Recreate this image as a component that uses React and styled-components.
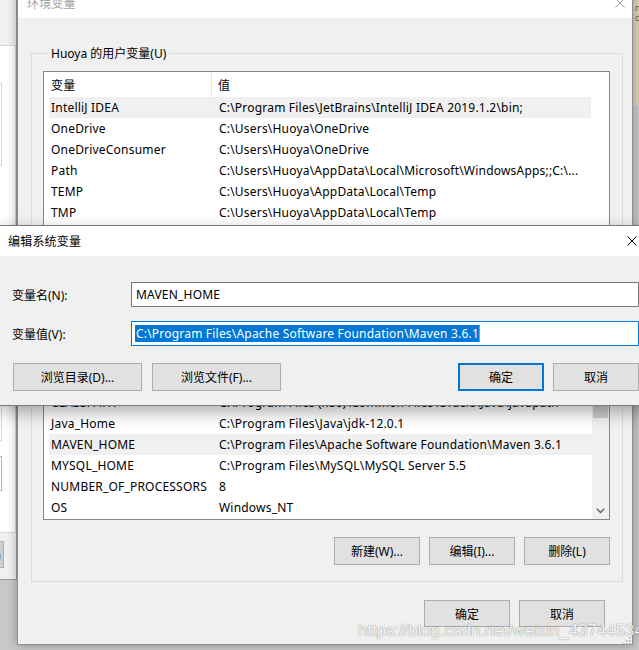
import React from 'react';
import styled, { createGlobalStyle } from 'styled-components';

const Global = createGlobalStyle`
  html, body { margin: 0; padding: 0; }
  body {
    width: 639px; height: 650px; overflow: hidden; background: #c8c8c8;
    font-family: "Noto Sans", "Noto Sans CJK SC", sans-serif;
    font-size: 12px; color: #000;
    letter-spacing: 0.2px;
  }
  * { box-sizing: border-box; }
`;

const Desktop = styled.div`
  position: relative;
  width: 639px;
  height: 650px;
  overflow: hidden;
  background: #c8c8c8;
`;

/* ---------- window behind (left) ---------- */
const BackWindow = styled.div`
  position: absolute;
  left: -300px;
  top: -40px;
  width: 317px;
  height: 620px;
  background: #f0f0f0;
  border: 1px solid #9a9a9a;
  display: flex;
  flex-direction: column;
  padding-top: 84px;
`;
const TabPanel = styled.div`
  height: 488px;
  background: #fff;
  border: 1px solid #d9d9d9;
  display: flex;
  flex-direction: column;
  align-items: flex-end;
  padding: 37px 13px 0 0;
`;
const PanelBox = styled.div`
  width: 200px;
  height: ${p => p.$h}px;
  margin-top: ${p => p.$mt}px;
  border: 1px solid #d5d5d5;
  background: #fff;
`;
const PanelButton = styled.div`
  width: 90px;
  height: 35px;
  margin-top: ${p => p.$mt}px;
  border: 1px solid #b5b5b5;
  background: #fff;
`;
const BackButtons = styled.div`
  display: flex;
  justify-content: flex-end;
  padding: 8px 12px 0 0;
`;
const BackButton = styled.div`
  width: 86px;
  height: 27px;
  background: #cfcfcf;
  border: 1px solid #adadad;
  display: flex;
  align-items: center;
  justify-content: flex-end;
  padding-right: 2px;
  color: #666;
`;

const RightStrip = styled.div`
  position: absolute;
  left: 633px;
  top: 0;
  width: 30px;
  height: 105px;
  background: #d9d1bb;
  font-size: 9px;
  line-height: 10px;
  color: #6b6558;
  padding: 3px 0 0 2px;
  white-space: pre;
`;

/* ---------- main window ---------- */
const MainWindow = styled.div`
  position: absolute;
  left: 17px;
  top: -14px;
  width: 616px;
  height: 659px;
  border: 1px solid #8f8f8f;
  background: #f0f0f0;
  box-shadow: 0 0 10px rgba(0, 0, 0, 0.3);
  display: flex;
  flex-direction: column;
`;
const TitleBar = styled.div`
  height: ${p => p.$h}px;
  flex: none;
  background: #fff;
  display: flex;
  align-items: center;
  justify-content: space-between;
  padding-left: ${p => p.$pl}px;
  color: ${p => (p.$inactive ? '#a0a0a0' : '#000')};
`;
const CloseBox = styled.div`
  width: 24px;
  height: 24px;
  margin-right: ${p => p.$mr}px;
  display: flex;
  align-items: center;
  justify-content: center;
`;
const MainBody = styled.div`
  flex: 1;
  display: flex;
  flex-direction: column;
  padding: 27px 9px 0 13px;
`;
const Group = styled.fieldset`
  margin: ${p => p.$mt || 0}px 0 0 0;
  padding: 9px 12px ${p => p.$pb}px 11px;
  border: 1px solid #dcdcdc;
  min-width: 0;
`;
const Legend = styled.legend`
  margin-left: 5px;
  padding: 0 3px;
  line-height: 17px;
  font-size: 12px;
  letter-spacing: 0;
`;
const ListBox = styled.div`
  height: ${p => p.$h}px;
  border: 1px solid #828790;
  background: #fff;
  display: flex;
  overflow: hidden;
`;
const ListRows = styled.div`
  flex: 1;
  min-width: 0;
  display: flex;
  flex-direction: column;
  justify-content: ${p => (p.$bottom ? 'flex-end' : 'flex-start')};
  padding: 0 0 ${p => (p.$bottom ? 1 : 0)}px 5px;
  overflow: hidden;
`;
const HeaderRow = styled.div`
  flex: none;
  display: flex;
  height: 25px;
  align-items: stretch;
`;
const HeaderCell = styled.div`
  display: flex;
  align-items: center;
  padding-left: ${p => p.$pl}px;
  width: ${p => (p.$w ? p.$w + 'px' : 'auto')};
  flex: ${p => (p.$w ? 'none' : '1')};
  border-right: ${p => (p.$divider ? '1px solid #e5e5e5' : 'none')};
`;
const Row = styled.div`
  flex: none;
  display: flex;
  height: 21px;
  align-items: center;
  background: ${p => (p.$selected ? '#f0f0f0' : 'transparent')};
  white-space: nowrap;
`;
const NameCell = styled.div`
  width: 163px;
  flex: none;
  padding-left: 2px;
  overflow: hidden;
`;
const ValueCell = styled.div`
  flex: 1;
  padding-left: 7px;
  overflow: hidden;
`;
const Gutter = styled.div`
  width: 18px;
  flex: none;
  background: #fff;
`;
const ScrollBar = styled.div`
  width: 17px;
  flex: none;
  background: #f0f0f0;
  display: flex;
  flex-direction: column;
  align-items: center;
`;
const ScrollArrow = styled.div`
  height: 17px;
  width: 17px;
  flex: none;
  display: flex;
  align-items: center;
  justify-content: center;
`;
const Thumb = styled.div`
  width: 15px;
  height: ${p => p.$h}px;
  flex: none;
  background: #cdcdcd;
`;
const Spacer = styled.div`
  flex: 1;
`;
const ButtonRow = styled.div`
  display: flex;
  justify-content: flex-end;
  gap: 9px;
  margin-top: ${p => p.$mt}px;
  padding-right: ${p => p.$pr || 0}px;
`;
const Button = styled.div`
  width: ${p => p.$w}px;
  height: ${p => p.$h || 28}px;
  flex: none;
  background: #e1e1e1;
  border: ${p => (p.$default ? '2px solid #0078d7' : '1px solid #adadad')};
  display: flex;
  align-items: center;
  justify-content: center;
  font-size: 12px;
  white-space: nowrap;
  letter-spacing: 0;
`;

/* ---------- edit dialog ---------- */
const Dialog = styled.div`
  position: absolute;
  left: -1px;
  top: 225px;
  width: 653px;
  border: 1px solid #7a7a7a;
  background: #f0f0f0;
  box-shadow: 0 6px 16px rgba(0, 0, 0, 0.32);
  display: flex;
  flex-direction: column;
`;
const DialogBody = styled.div`
  display: flex;
  flex-direction: column;
  padding: 26px 12px 14px 12px;
`;
const FieldRow = styled.div`
  display: flex;
  align-items: center;
  margin-top: ${p => p.$mt || 0}px;
`;
const FieldLabel = styled.div`
  width: 119px;
  flex: none;
  letter-spacing: 0;
`;
const Input = styled.div`
  flex: 1;
  height: 25px;
  background: #fff;
  border: 1px solid ${p => (p.$focus ? '#0078d7' : '#7a7a7a')};
  display: flex;
  align-items: center;
  padding-left: ${p => (p.$focus ? 3 : 4)}px;
  white-space: nowrap;
`;
const Selection = styled.span`
  background: #0078d7;
  color: #fff;
  padding-left: 1px;
  line-height: 17px;
  border-right: 1px solid #f08a24;
`;
const DialogButtons = styled.div`
  display: flex;
  align-items: center;
  margin-top: 17px;
  padding-left: 1px;
`;
const ButtonGroup = styled.div`
  display: flex;
  gap: ${p => p.$gap}px;
`;

const Watermark = styled.div`
  position: absolute;
  left: 358px;
  top: 621px;
  font-family: "Liberation Sans", Arial, sans-serif;
  font-size: 17px;
  letter-spacing: -0.1px;
  color: rgba(255, 255, 255, 0.92);
  text-shadow: 0 0 1px rgba(0, 0, 0, 0.45), 0 0 2px rgba(0, 0, 0, 0.15);
  white-space: nowrap;
`;
const Grip = styled.svg`
  position: absolute;
  left: 622px;
  top: 636px;
`;

const CloseIcon = ({ color }) => (
  <svg width="10" height="10" viewBox="0 0 10 10">
    <path d="M0.5 0.5 L9.5 9.5 M9.5 0.5 L0.5 9.5" stroke={color} strokeWidth="1" fill="none" />
  </svg>
);

const userVars = [
  ['IntelliJ IDEA', 'C:\\Program Files\\JetBrains\\IntelliJ IDEA 2019.1.2\\bin;', true],
  ['OneDrive', 'C:\\Users\\Huoya\\OneDrive'],
  ['OneDriveConsumer', 'C:\\Users\\Huoya\\OneDrive'],
  ['Path', 'C:\\Users\\Huoya\\AppData\\Local\\Microsoft\\WindowsApps;;C:\\...'],
  ['TEMP', 'C:\\Users\\Huoya\\AppData\\Local\\Temp'],
  ['TMP', 'C:\\Users\\Huoya\\AppData\\Local\\Temp'],
];

const sysVars = [
  ['ComSpec', 'C:\\WINDOWS\\system32\\cmd.exe'],
  ['DriverData', 'C:\\Windows\\System32\\Drivers\\DriverData'],
  ['CLASSPATH', 'C:\\Program Files (x86)\\Common Files\\Oracle\\Java\\javapath'],
  ['Java_Home', 'C:\\Program Files\\Java\\jdk-12.0.1'],
  ['MAVEN_HOME', 'C:\\Program Files\\Apache Software Foundation\\Maven 3.6.1', true],
  ['MYSQL_HOME', 'C:\\Program Files\\MySQL\\MySQL Server 5.5'],
  ['NUMBER_OF_PROCESSORS', '8'],
  ['OS', 'Windows_NT'],
];

export default function App() {
  return (
    <Desktop>
      <Global />

      <BackWindow>
        <TabPanel>
          <PanelBox $h={83} $mt={0} />
          <PanelBox $h={110} $mt={165} />
          <PanelButton $mt={15} />
        </TabPanel>
        <BackButtons>
          <BackButton>应用(A)</BackButton>
        </BackButtons>
      </BackWindow>

      <RightStrip>{'m\ndi'}</RightStrip>

      <MainWindow>
        <TitleBar $h={31} $pl={9} $inactive>
          <span>环境变量</span>
          <CloseBox $mr={0}>
            <CloseIcon color="#a0a0a0" />
          </CloseBox>
        </TitleBar>
        <MainBody>
          <Group $pb={15}>
            <Legend>Huoya 的用户变量(U)</Legend>
            <ListBox $h={170}>
              <ListRows>
                <HeaderRow>
                  <HeaderCell $w={163} $pl={2} $divider>变量</HeaderCell>
                  <HeaderCell $pl={6}>值</HeaderCell>
                </HeaderRow>
                {userVars.map(([n, v, s]) => (
                  <Row key={n} $selected={s}>
                    <NameCell>{n}</NameCell>
                    <ValueCell>{v}</ValueCell>
                  </Row>
                ))}
              </ListRows>
              <Gutter />
            </ListBox>
            <ButtonRow $mt={17}>
              <Button $w={86}>新建(N)...</Button>
              <Button $w={86}>编辑(E)...</Button>
              <Button $w={86}>删除(D)</Button>
            </ButtonRow>
          </Group>

          <Group $mt={9} $pb={16}>
            <Legend>系统变量(S)</Legend>
            <ListBox $h={183}>
              <ListRows $bottom>
                <HeaderRow>
                  <HeaderCell $w={163} $pl={2} $divider>变量</HeaderCell>
                  <HeaderCell $pl={6}>值</HeaderCell>
                </HeaderRow>
                {sysVars.map(([n, v, s]) => (
                  <Row key={n} $selected={s}>
                    <NameCell>{n}</NameCell>
                    <ValueCell>{v}</ValueCell>
                  </Row>
                ))}
              </ListRows>
              <ScrollBar>
                <ScrollArrow />
                <Thumb $h={63} />
                <Spacer />
                <ScrollArrow>
                  <svg width="9" height="6" viewBox="0 0 9 6">
                    <path d="M0.8 0.8 L4.5 4.5 L8.2 0.8" stroke="#606060" strokeWidth="1.4" fill="none" />
                  </svg>
                </ScrollArrow>
              </ScrollBar>
            </ListBox>
            <ButtonRow $mt={17}>
              <Button $w={86}>新建(W)...</Button>
              <Button $w={86}>编辑(I)...</Button>
              <Button $w={86}>删除(L)</Button>
            </ButtonRow>
          </Group>

          <ButtonRow $mt={18} $pr={18}>
            <Button $w={86} $h={27}>确定</Button>
            <Button $w={86} $h={27}>取消</Button>
          </ButtonRow>
        </MainBody>
      </MainWindow>

      <Dialog>
        <TitleBar $h={30} $pl={8}>
          <span>编辑系统变量</span>
          <CloseBox $mr={7}>
            <CloseIcon color="#000" />
          </CloseBox>
        </TitleBar>
        <DialogBody>
          <FieldRow>
            <FieldLabel>变量名(N):</FieldLabel>
            <Input>MAVEN_HOME</Input>
          </FieldRow>
          <FieldRow $mt={14}>
            <FieldLabel>变量值(V):</FieldLabel>
            <Input $focus>
              <Selection>C:\Program Files\Apache Software Foundation\Maven 3.6.1</Selection>
            </Input>
          </FieldRow>
          <DialogButtons>
            <ButtonGroup $gap={10}>
              <Button $w={129}>浏览目录(D)...</Button>
              <Button $w={129}>浏览文件(F)...</Button>
            </ButtonGroup>
            <Spacer />
            <ButtonGroup $gap={9}>
              <Button $w={86} $default>确定</Button>
              <Button $w={86}>取消</Button>
            </ButtonGroup>
          </DialogButtons>
        </DialogBody>
      </Dialog>

      <Watermark>https://blog.csdn.net/weixin_43744534</Watermark>
      <Grip width="9" height="9" viewBox="0 0 9 9">
        {[[7, 1], [7, 4], [4, 4], [7, 7], [4, 7], [1, 7]].map(([x, y]) => (
          <rect key={`${x}-${y}`} x={x} y={y} width="1.5" height="1.5" fill="#b0b0b0" />
        ))}
      </Grip>
    </Desktop>
  );
}
